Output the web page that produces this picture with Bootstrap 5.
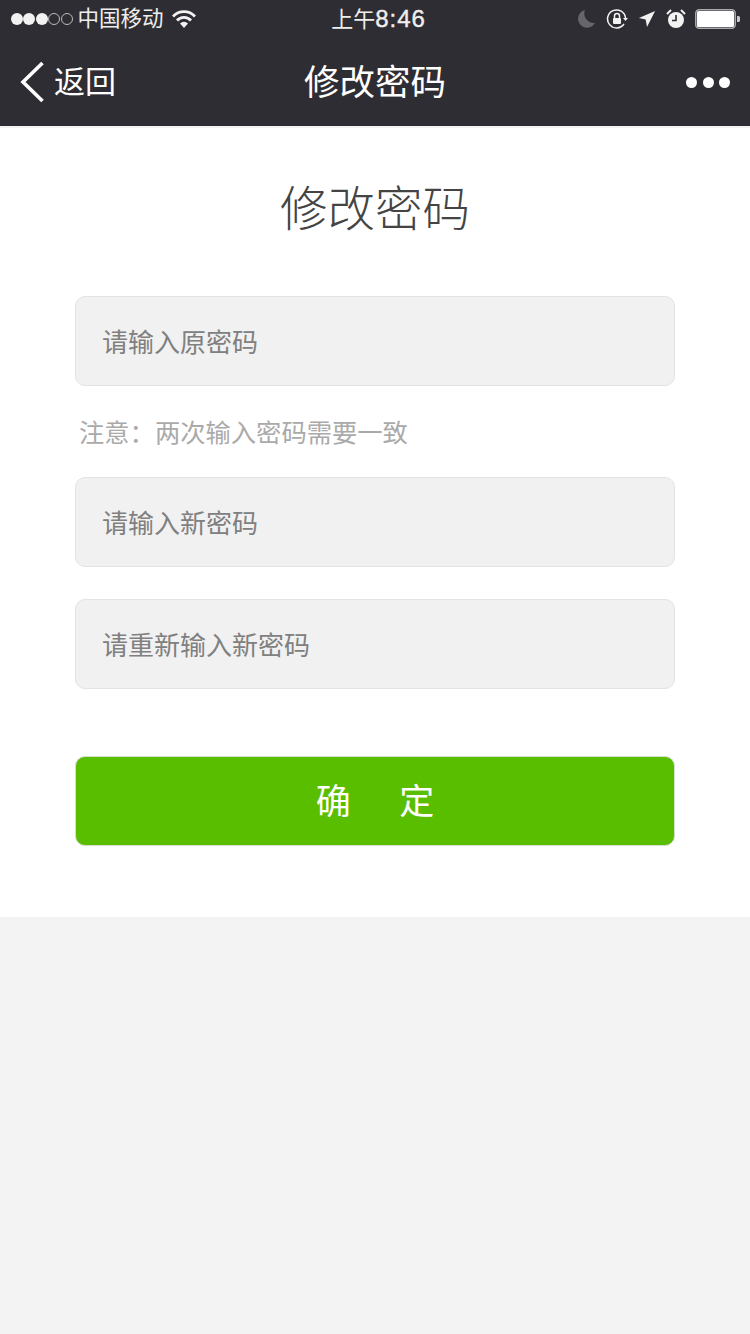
<!DOCTYPE html>
<html lang="zh">
<head>
    <meta charset="UTF-8">
    <meta name="viewport" content="width=device-width, initial-scale=1.0">
    <link href="https://cdn.jsdelivr.net/npm/bootstrap@5.3.0/dist/css/bootstrap.min.css" rel="stylesheet">
    <title>修改密码</title>

    <style>
        body {
            background: #f3f3f3;
            font-family: "Liberation Sans", "Noto Sans CJK SC", sans-serif;
        }
        .top-head {
            background: #2e2d33;
            height: 126px;
            color: #fff;
        }
        .status-row {
            height: 40px;
            padding: 0 10px 2px 11px;
            font-size: 21.500px;
            color: #eee;
        }
        .status-time {
            font-size: 22px;
            left: 0;
            right: 0;
            top: 4px;
            padding-left: 7px;
            line-height: 30px;
        }
        .status-time span {
            font-size: 24px;
            letter-spacing: 1px;
            -webkit-text-stroke: .4px #eee;
        }
        .sig-dots { gap: .4px; }
        .sig-dots i {
            display: block;
            width: 12px;
            height: 12px;
            border-radius: 50%;
            background: #f2f2f2;
        }
        .sig-dots i.off {
            background: transparent;
            border: 1px solid #bbb;
        }
        .carrier { margin-left: 5px; margin-right: 8px; }
        .status-icons { gap: 10px; }
        .battery-icon { margin-left: -1px; }
        .nav-row {
            height: 84px;
            padding: 0 20px;
        }
        .back-text { font-size: 31px; margin-left: 9px; padding-top: 2px; }
        .nav-title {
            font-size: 35.500px;
            left: 0;
            right: 0;
            top: 61px;
            line-height: 44px;
        }
        .more-dots { gap: 5.500px; }
        .more-dots i {
            display: block;
            width: 11px;
            height: 11px;
            border-radius: 50%;
            background: #fff;
        }
        .pwd-panel {
            background: #fff;
            height: 789px;
            margin-top: 2px;
            padding: 0 75px;
        }
        .pwd-title {
            font-size: 47.500px;
            font-weight: 300;
            color: #444;
            line-height: 60px;
            padding-top: 52px;
            height: 168px;
        }
        .pwd-input.form-control {
            height: 90px;
            background: #f1f1f1;
            border: 1px solid #e3e3e3;
            border-radius: 10px;
            padding: 5px 26px 0;
            font-size: 26px;
        }
        .pwd-input.form-control::placeholder {
            color: #808080;
            opacity: 1;
        }
        .pwd-note {
            font-size: 25.300px;
            color: #aaa;
            line-height: 36px;
            padding: 29px 0 26px 4px;
            height: 91px;
        }
        .gap-next { margin-top: 32px; }
        .pwd-btn.btn {
            height: 90px;
            margin-top: 67px;
            padding: 3px 0 0;
            background: #59be00;
            border: 1px solid #d5dfcd;
            border-radius: 10px;
            color: #fff;
            font-size: 35px;
        }
    </style>
</head>
<body>
<div class="top-head position-relative">
    <div class="status-row d-flex align-items-center">
        <span class="sig-dots d-flex">
            <i></i><i></i><i></i><i class="off"></i><i class="off"></i>
        </span>
        <span class="carrier">中国移动</span>
        <svg width="24" height="18" viewBox="0 0 24 18">
            <path d="M1 6.500a15 15 0 0 1 22 0" fill="none" stroke="#f2f2f2" stroke-width="2.800"/>
            <path d="M5 10.500a9.500 9.500 0 0 1 14 0" fill="none" stroke="#f2f2f2" stroke-width="2.800"/>
            <path d="M8 13.500a5.500 5.500 0 0 1 8 0L12 18z" fill="#f2f2f2"/>
        </svg>
        <div class="status-time position-absolute text-center">上午<span>8:46</span></div>
        <div class="status-icons ms-auto d-flex align-items-center">
            <svg width="20" height="20" viewBox="0 0 20 20"><path d="M9 1a9 9 0 1 0 10 13A9.500 9.500 0 0 1 9 1z" fill="#66656b"/></svg>
            <svg width="22" height="22" viewBox="0 0 22 22">
                <path d="M18 16a9 9 0 1 1 1.500-6" fill="none" stroke="#f2f2f2" stroke-width="1.500"/>
                <path d="M17 10h5l-2.500 3z" fill="#f2f2f2"/>
                <rect x="7" y="10" width="8" height="6" rx="1" fill="#f2f2f2"/>
                <path d="M8.500 10V8a2.500 2.500 0 0 1 5 0v2" fill="none" stroke="#f2f2f2" stroke-width="1.500"/>
            </svg>
            <svg width="18" height="20" viewBox="0 0 20 20"><path d="M19 1L10 19l-1.500-8.500L1 9z" fill="#f2f2f2"/></svg>
            <svg width="20" height="20" viewBox="0 0 20 20">
                <circle cx="10" cy="11" r="8" fill="#f2f2f2"/>
                <path d="M10 6v5.500H6" fill="none" stroke="#2e2d33" stroke-width="1.600"/>
                <path d="M1 5l4-4M19 5l-4-4" stroke="#f2f2f2" stroke-width="2"/>
            </svg>
            <svg width="45" height="22" viewBox="0 0 45 22" class="battery-icon">
                <rect x=".75" y="1.750" width="39.500" height="18.500" rx="3.500" fill="none" stroke="#a9a9ab" stroke-width="1.500"/>
                <rect x="2" y="3" width="37" height="16" rx="1.500" fill="#fff"/>
                <path d="M42 8h1.500a1.500 1.500 0 0 1 1.500 1.500v3a1.500 1.500 0 0 1-1.500 1.500H42z" fill="#c9c9c9"/>
            </svg>
        </div>
    </div>
    <div class="nav-row d-flex align-items-center">
        <svg width="25" height="42" viewBox="0 0 25 42">
            <path d="M22.500 2L3 21l19.500 19" fill="none" stroke="#fff" stroke-width="3.600"/>
        </svg>
        <span class="back-text">返回</span>
        <div class="nav-title position-absolute text-center">修改密码</div>
        <div class="more-dots ms-auto d-flex"><i></i><i></i><i></i></div>
    </div>
</div>

<div class="pwd-panel">
    <h1 class="pwd-title text-center m-0">修改密码</h1>
    <form>
        <input type="password" class="pwd-input form-control" placeholder="请输入原密码">
        <div class="pwd-note">注意：两次输入密码需要一致</div>
        <input type="password" class="pwd-input form-control" placeholder="请输入新密码">
        <input type="password" class="pwd-input form-control gap-next" placeholder="请重新输入新密码">
        <button type="button" class="pwd-btn btn w-100">确&nbsp;&nbsp;&nbsp;&nbsp;&nbsp;定</button>
    </form>
</div>

<script src="https://cdn.jsdelivr.net/npm/bootstrap@5.3.0/dist/js/bootstrap.bundle.min.js"></script>
</body>
</html>
